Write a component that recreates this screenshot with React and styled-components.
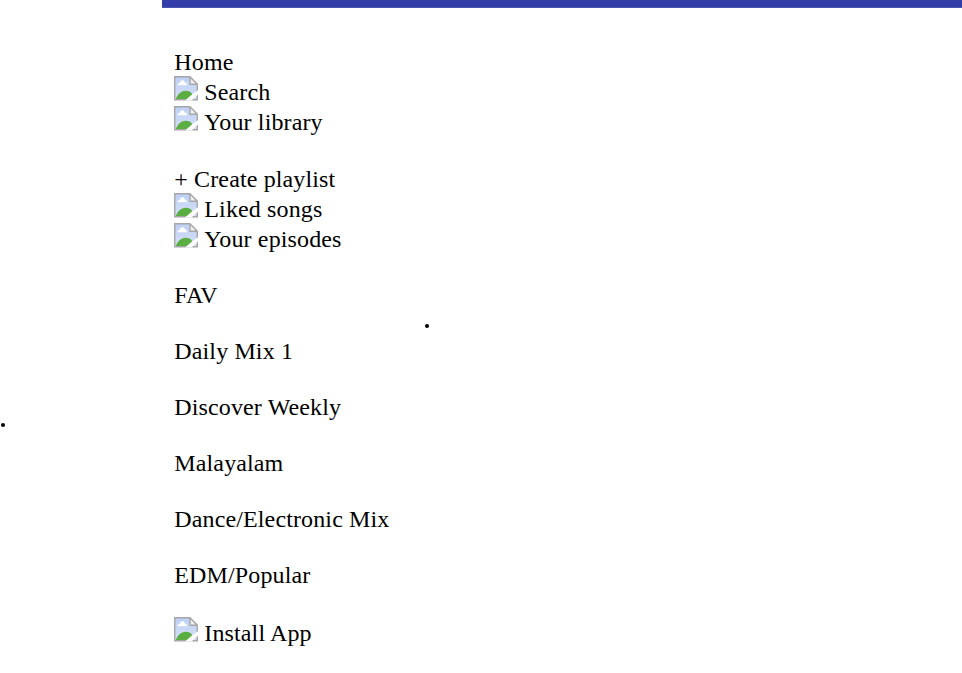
import React from "react";
import styled, { createGlobalStyle } from "styled-components";

const GlobalStyle = createGlobalStyle`
  body { margin: 0; background: #fff; overflow: hidden; }
`;

const Page = styled.div`
  position: relative;
  height: 673px;
  overflow: hidden;
  color: #000;
  font-family: "Liberation Serif", "Times New Roman", serif;
  font-size: 24px;
  letter-spacing: 0.13px;
`;

const Bar = styled.header`
  box-sizing: border-box;
  height: 8px;
  margin-left: 162px;
  background: #333ea8;
  border-bottom: 1px solid #4b55b2;
`;

const Panel = styled.main`
  margin-left: 162px;
  padding: 39px 0 0 12px;
`;

const Group = styled.nav`
  display: flex;
  flex-direction: column;
  margin-bottom: ${(p) => p.$gap}px;
`;

const Item = styled.div`
  display: flex;
  gap: 6.3px;
  height: ${(p) => p.$height || 30}px;
  line-height: 30px;
  padding-left: 0.3px;
  white-space: nowrap;
`;

const Icon = styled.svg`
  width: 24px;
  height: 24.5px;
  flex: none;
  margin: -1px 0 0 -0.3px;
`;

const Dot = styled.span`
  position: absolute;
  left: ${(p) => p.$x}px;
  top: ${(p) => p.$y}px;
  width: 4px;
  height: 4px;
  border-radius: 50%;
  background: #000;
`;

function ImageIcon() {
  return (
    <Icon viewBox="0 0 24 24" preserveAspectRatio="none">
      <defs>
        <linearGradient id="sky" x1="0" y1="0" x2="0" y2="1">
          <stop offset="0" stopColor="#bdd0f5" />
          <stop offset="1" stopColor="#d6e0f8" />
        </linearGradient>
      </defs>
      <path d="M0.75 0.75H16L23.25 8V23.25H0.75Z" fill="url(#sky)" />
      <path d="M3.5 9c0-1.5 1-2.5 2.5-2.5C6.5 3.5 10 3.5 10.5 6c1.5 0 2.5 1.3 2.5 3Z" fill="#fff" />
      <path d="M1.5 23.25C3.5 18 7 14.5 11.5 14.5c3 0 5.5 1 7 3.5L14 23.25Z" fill="#5aae42" />
      <path d="M16 0.75L23.25 8H16Z" fill="#f0f0f0" />
      <path d="M16 0.75H0.75V23.25H23.25V8L16 0.75V8H23.25" fill="none" stroke="#a6a6a6" strokeWidth="1.4" />
      <path d="M24 14L18 18L11 24H17.5L24 18Z" fill="#fff" />
    </Icon>
  );
}

const playlists = ["FAV", "Daily Mix 1", "Discover Weekly", "Malayalam", "Dance/Electronic Mix", "EDM/Popular"];

export default function App() {
  return (
    <Page>
      <GlobalStyle />
      <Bar />
      <Panel>
        <Group $gap={27}>
          <Item>Home</Item>
          <Item><ImageIcon />Search</Item>
          <Item><ImageIcon />Your library</Item>
        </Group>
        <Group $gap={26}>
          <Item>+ Create playlist</Item>
          <Item><ImageIcon />Liked songs</Item>
          <Item><ImageIcon />Your episodes</Item>
        </Group>
        <Group $gap={2}>
          {playlists.map((name) => <Item key={name} $height={56}>{name}</Item>)}
        </Group>
        <Item><ImageIcon />Install App</Item>
      </Panel>
      <Dot $x={1} $y={423} />
      <Dot $x={425} $y={324} />
    </Page>
  );
}
